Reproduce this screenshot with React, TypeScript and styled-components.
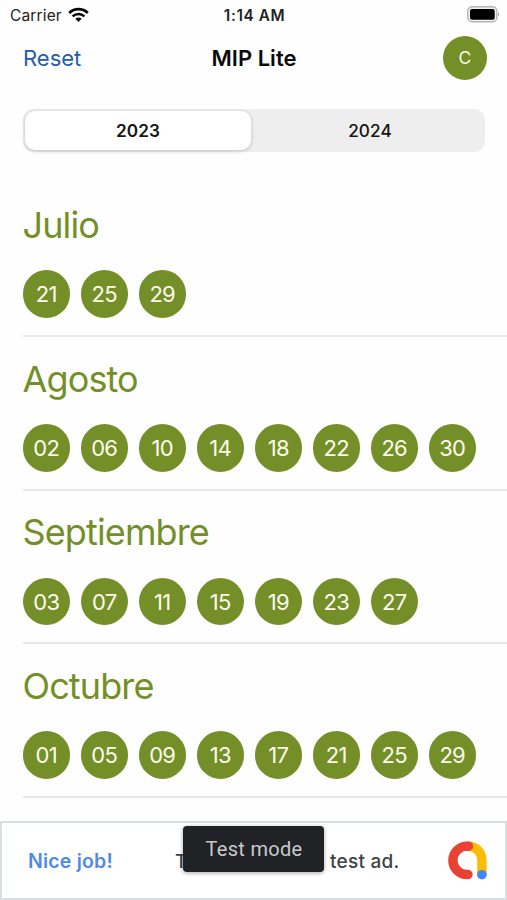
import React from "react";
import styled, { createGlobalStyle } from "styled-components";

const GREEN = "#758f28";

const GlobalStyle = createGlobalStyle`
  * { box-sizing: border-box; }
  body { margin: 0; background: #fefefe; font-family: Inter, "Liberation Sans", sans-serif; }
`;

const Screen = styled.div`
  width: 507px;
  height: 900px;
  overflow: hidden;
  display: flex;
  flex-direction: column;
  background: #fefefe;
`;

const StatusBar = styled.div`
  height: 30px;
  flex: none;
  display: grid;
  grid-template-columns: 1fr auto 1fr;
  align-items: center;
  padding: 0 7px 0 10px;
  color: #222;
`;

const Carrier = styled.div`
  display: flex;
  align-items: center;
  gap: 6px;
  font-size: 15.5px;
  line-height: 32px;
  letter-spacing: 0.15px;

  svg {
    margin-bottom: 2px;
  }
`;

const Clock = styled.div`
  margin-right: 1px;
  font-size: 15.3px;
  font-weight: 600;
  line-height: 32px;
  letter-spacing: 0.6px;
`;

const BatterySlot = styled.div`
  display: flex;
  justify-content: flex-end;
  padding-bottom: 4px;
`;

const NavBar = styled.header`
  height: 56px;
  flex: none;
  display: grid;
  grid-template-columns: 1fr auto 1fr;
  align-items: center;
  padding: 0 20px 0 23px;
`;

const ResetButton = styled.button`
  border: 0;
  padding: 0;
  background: none;
  text-align: left;
  font: 400 22px/28px Inter, sans-serif;
  color: #245da7;
`;

const Title = styled.h1`
  margin: 0;
  padding-right: 2px;
  font-size: 22px;
  line-height: 28px;
  font-weight: 600;
  letter-spacing: 0;
  color: #0b0b0b;
`;

const Avatar = styled.div`
  justify-self: end;
  width: 44px;
  height: 44px;
  border-radius: 50%;
  background: ${GREEN};
  color: #fafbe9;
  font-size: 17.5px;
  line-height: 44px;
  text-align: center;
`;

const Segments = styled.div`
  flex: none;
  display: grid;
  grid-template-columns: 226px 1fr;
  column-gap: 4px;
  height: 43px;
  margin: 23px 22px 31.6px 23px;
  padding: 2px 0 2px 2px;
  border-radius: 11px;
  background: #eee;
`;

const Segment = styled.button<{ $active?: boolean }>`
  border: 0;
  padding: 0;
  border-radius: 10px;
  font: ${(p) => (p.$active ? 600 : 500)} 17.2px/39px Inter, sans-serif;
  letter-spacing: 0.1px;
  color: #151515;
  background: ${(p) => (p.$active ? "#fff" : "transparent")};
  box-shadow: ${(p) => (p.$active ? "0 1px 4px rgba(0, 0, 0, 0.2)" : "none")};
`;

const MonthList = styled.main`
  flex: none;
  height: 637.4px;
`;

const Month = styled.section`
  height: 153.6px;
  margin-left: 22.5px;
  padding-top: 18.4px;
  border-bottom: 2px solid #e9e9ea;
`;

const MonthName = styled.h2`
  margin: 0;
  font-size: 36px;
  line-height: 46px;
  font-weight: 380;
  letter-spacing: -0.87px;
  color: ${GREEN};
`;

const Days = styled.div`
  display: flex;
  gap: 10.5px;
  padding-top: 22.5px;
`;

const Day = styled.div`
  flex: none;
  width: 47.5px;
  height: 47.5px;
  border-radius: 50%;
  background: ${GREEN};
  color: #fbfcec;
  font-size: 22px;
  line-height: 48px;
  text-align: center;
  letter-spacing: -0.7px;
`;

const AdBanner = styled.footer`
  position: relative;
  flex: none;
  height: 79px;
  display: flex;
  align-items: center;
  border: 2px solid #d9dee1;
  padding: 0 17px 0 26px;
  background: #fff;
`;

const AdPraise = styled.div`
  width: 147px;
  padding-top: 2px;
  font: 600 19.5px/26px Inter, sans-serif;
  letter-spacing: 0.2px;
  color: #5089ec;
`;

const AdText = styled.div`
  flex: 1;
  display: flex;
  padding-top: 3px;
  white-space: nowrap;
  font: 500 19px/26px Inter, sans-serif;
  color: #414246;
`;

const AdLead = styled.span`
  width: 155px;
  letter-spacing: -0.35px;
`;

const AdTail = styled.span`
  letter-spacing: 0.25px;
`;

const Toast = styled.div`
  position: absolute;
  left: 181px;
  top: 3px;
  width: 141px;
  height: 46px;
  padding-left: 1px;
  border-radius: 4px;
  background: #202225;
  color: #c9cacc;
  font: 400 20px/47px Roboto, sans-serif;
  letter-spacing: 0.3px;
  text-align: center;
  box-shadow: 0 1px 4px rgba(0, 0, 0, 0.35);
`;

const WifiIcon = () => (
  <svg width="21" height="16" viewBox="0 0 21 16" fill="none" stroke="#090909">
    <path d="M1.2 6C6.5 .9 14.5 .9 19.8 6" strokeWidth="2.7" />
    <path d="M4.6 9.4C8 6.2 13 6.2 16.4 9.4" strokeWidth="2.6" />
    <path d="M10.5 15L7.3 11.8Q10.5 9.2 13.7 11.8Z" fill="#090909" stroke="none" />
  </svg>
);

const BatteryIcon = () => (
  <svg width="33" height="17" viewBox="0 0 33 17">
    <rect x="0.8" y="0.8" width="29" height="15" rx="4.2" fill="#f0f0f0" stroke="#b5b5b5" strokeWidth="1.4" />
    <rect x="3" y="3" width="24.7" height="10.8" rx="2" fill="#000" />
    <path d="M31 6Q33 8.3 31 10.6Z" fill="#999" />
  </svg>
);

const AdLogo = () => (
  <svg width="40" height="40" viewBox="0 0 40 40" fill="none" strokeWidth="9.4" strokeLinecap="round">
    <path d="M20.5 6.2A13.4 14 0 0 1 33.9 20.2V33.5" stroke="#fbbc04" />
    <path d="M20.5 6.2A14.2 14.2 0 1 0 20 34.5" stroke="#e94235" />
    <circle cx="33.9" cy="34.7" r="4.8" fill="#4285f4" />
  </svg>
);

const months = [
  { name: "Julio", days: ["21", "25", "29"] },
  { name: "Agosto", days: ["02", "06", "10", "14", "18", "22", "26", "30"] },
  { name: "Septiembre", days: ["03", "07", "11", "15", "19", "23", "27"] },
  { name: "Octubre", days: ["01", "05", "09", "13", "17", "21", "25", "29"] },
];

export default function App() {
  return (
    <>
      <GlobalStyle />
      <Screen>
        <StatusBar>
          <Carrier>
            Carrier
            <WifiIcon />
          </Carrier>
          <Clock>1:14 AM</Clock>
          <BatterySlot>
            <BatteryIcon />
          </BatterySlot>
        </StatusBar>
        <NavBar>
          <ResetButton>Reset</ResetButton>
          <Title>MIP Lite</Title>
          <Avatar>C</Avatar>
        </NavBar>
        <Segments>
          <Segment $active>2023</Segment>
          <Segment>2024</Segment>
        </Segments>
        <MonthList>
          {months.map((m) => (
            <Month key={m.name}>
              <MonthName>{m.name}</MonthName>
              <Days>
                {m.days.map((d) => (
                  <Day key={d}>{d}</Day>
                ))}
              </Days>
            </Month>
          ))}
        </MonthList>
        <AdBanner>
          <AdPraise>Nice job!</AdPraise>
          <AdText>
            <AdLead>This is a 320x50 </AdLead>
            <AdTail>test ad.</AdTail>
          </AdText>
          <AdLogo />
          <Toast>Test mode</Toast>
        </AdBanner>
      </Screen>
    </>
  );
}
